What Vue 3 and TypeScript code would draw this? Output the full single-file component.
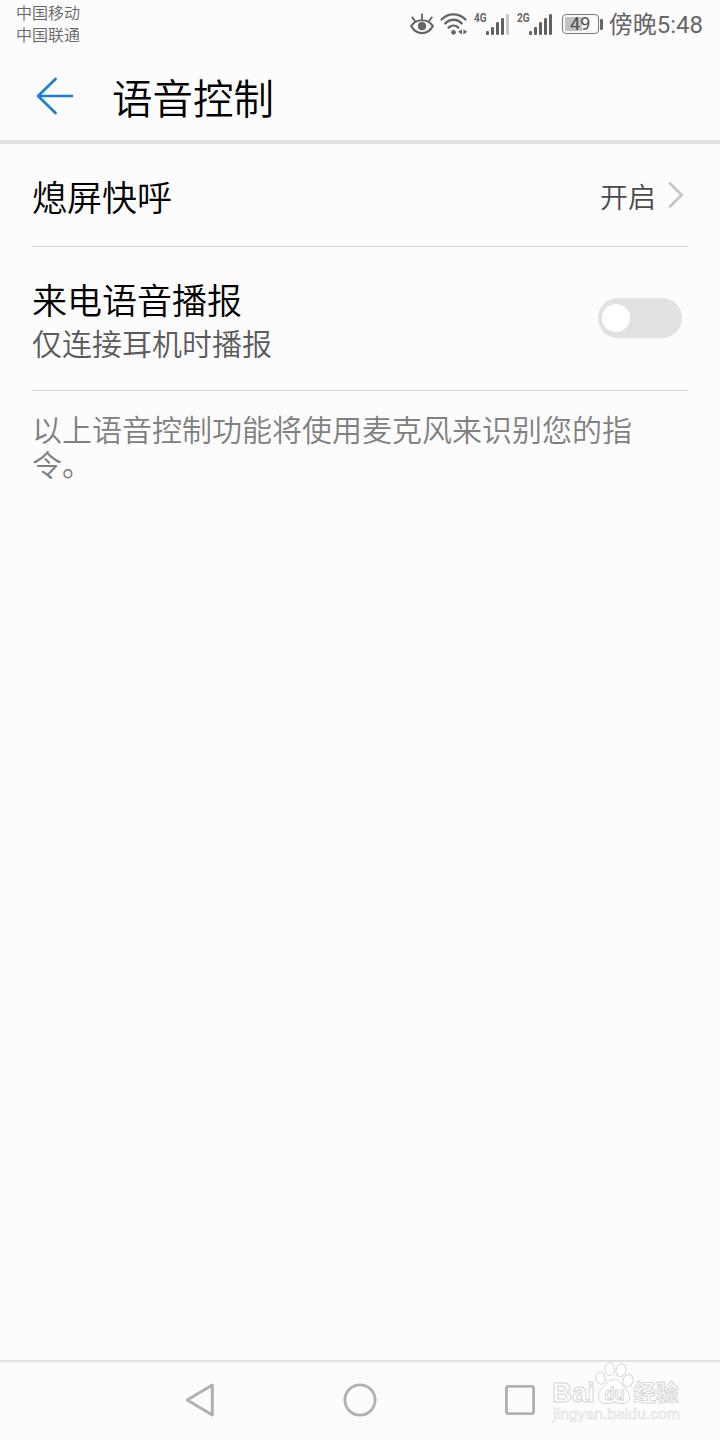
<script setup lang="ts">
import { ref } from 'vue'

const carriers: string[] = ['中国移动', '中国联通']
const announce = ref<boolean>(false)
const bars = [
  { x: 0, h: 4 },
  { x: 5, h: 8 },
  { x: 10, h: 13 },
  { x: 15, h: 17 },
  { x: 20, h: 21 },
]
const sims = [
  { label: '4G', level: 4 },
  { label: '2G', level: 5 },
]
</script>

<template>
  <div class="screen">
    <div class="status">
      <div class="carriers">
        <span v-for="c in carriers" :key="c">{{ c }}</span>
      </div>
      <div class="indicators">
        <svg class="eye" width="24" height="22" viewBox="0 0 24 22" fill="none" stroke="#666" stroke-width="2.2" stroke-linecap="round">
          <path d="M1.2 13C6 5.3 18 5.3 22.8 13C18 22.5 6 22.5 1.2 13Z" />
          <path d="M12 1.3V6M2.2 4.4L5 8M21.8 4.4L19 8" stroke-width="1.9" />
          <circle cx="12" cy="13.2" r="4.1" fill="#666" stroke="none" />
        </svg>
        <svg class="wifi" width="28" height="23" viewBox="0 0 28 23" fill="none" stroke="#666" stroke-width="2.3" stroke-linecap="round">
          <path d="M1.5 6.5C8.5 -.3 18.5 -.3 25.5 6.5M5.2 10.5C10.2 5.5 16.8 5.5 21.8 10.5M8.6 14.6C11.5 11.9 15.5 11.9 18.4 14.6" />
          <circle cx="13.5" cy="19.3" r="2.4" fill="#666" stroke="none" />
          <path d="M22 16.2V21.4L18 18.8ZM23.4 16.2V21.4L27.2 18.8Z" fill="#666" stroke="none" />
        </svg>
        <div v-for="s in sims" :key="s.label" class="sim">
          <span class="net">{{ s.label }}</span>
          <svg width="23" height="23" viewBox="0 0 23 23">
            <rect v-for="(b, i) in bars" :key="b.x" :x="b.x" :y="22 - b.h" width="3" :height="b.h" rx="1.2" :fill="i < s.level ? '#606060' : '#c8c8c8'" />
          </svg>
        </div>
        <div class="battery"><span class="cell">49</span><i class="nub"></i></div>
        <span class="clock">傍晚5:48</span>
      </div>
    </div>

    <header class="bar">
      <svg width="38" height="38" viewBox="0 0 38 38" fill="none" stroke="#1b7fd8" stroke-width="2.7" stroke-linecap="round" stroke-linejoin="round">
        <path d="M19.5 2L2 19L19.5 36M2.5 19H36" />
      </svg>
      <h1>语音控制</h1>
    </header>

    <main>
      <div class="row first">
        <span class="title">熄屏快呼</span>
        <span class="value">开启</span>
        <svg width="16" height="28" viewBox="0 0 16 28" fill="none" stroke="#c5c5c5" stroke-width="2.6" stroke-linecap="round" stroke-linejoin="miter">
          <path d="M2 2.5L13.7 14L2 25.5" />
        </svg>
      </div>
      <div class="row second">
        <div class="texts">
          <span class="title">来电语音播报</span>
          <span class="sub">仅连接耳机时播报</span>
        </div>
        <button class="switch" :class="{ on: announce }" role="switch" :aria-checked="announce" @click="announce = !announce">
          <i></i>
        </button>
      </div>
      <p class="note">以上语音控制功能将使用麦克风来识别您的指令。</p>
    </main>

    <nav class="nav">
      <svg width="32" height="36" viewBox="0 0 32 36" fill="none" stroke="#b0b0b0" stroke-width="3" stroke-linejoin="round">
        <path d="M28.3 3L3.3 18L28.3 33Z" />
      </svg>
      <svg width="34" height="34" viewBox="0 0 34 34" fill="none" stroke="#b0b0b0" stroke-width="2.8">
        <circle cx="17" cy="17" r="15.1" />
      </svg>
      <svg width="30" height="30" viewBox="0 0 30 30" fill="none" stroke="#b0b0b0" stroke-width="2.8">
        <rect x="1.4" y="1.4" width="27.2" height="27.2" rx="1.8" />
      </svg>
      <svg class="mark" width="132" height="64" viewBox="0 0 132 64" fill="#fff" stroke="#d6d6d6" stroke-width="1">
        <text class="latin" x="0" y="40.5" font-size="28" textLength="43" lengthAdjust="spacingAndGlyphs">Bai</text>
        <ellipse cx="48.5" cy="17" rx="4.6" ry="6.2" transform="rotate(-12 48.5 17)" />
        <ellipse cx="57.7" cy="8.2" rx="4.8" ry="6.5" />
        <ellipse cx="69" cy="9.2" rx="5" ry="6.5" transform="rotate(12 69 9.2)" />
        <ellipse cx="76" cy="19.5" rx="5" ry="6.2" transform="rotate(20 76 19.5)" />
        <path d="M62.5 18.5C55 18.5 54 24.5 49.5 28C44.5 33 46 42.5 53 42.5C58 43 59 41.5 62.5 41.5C66 41.5 68 43 72 42.5C79.5 41.5 79 33 73.5 28C69.5 24.5 69 18.5 62.5 18.5Z" />
        <text class="latin" x="52.5" y="38.5" font-size="18" textLength="20" lengthAdjust="spacingAndGlyphs">du</text>
        <text class="han" x="81.5" y="39.7" font-size="23" textLength="45" lengthAdjust="spacingAndGlyphs">经验</text>
        <text class="url" x="1" y="58" font-size="15" textLength="127" lengthAdjust="spacingAndGlyphs">jingyan.baidu.com</text>
      </svg>
    </nav>
  </div>
</template>

<style>
body {
  margin: 0;
  background: #fcfcfc;
}
</style>

<style scoped>
.screen {
  width: 720px;
  height: 1440px;
  display: flex;
  flex-direction: column;
  overflow: hidden;
  background: #fcfcfc;
  color: #000;
  font-family: "Noto Sans CJK SC", sans-serif;
  font-weight: 350;
}
.status {
  height: 52px;
  box-sizing: border-box;
  padding: 0 17px 0 16px;
  display: flex;
  justify-content: space-between;
  color: #666;
}
.carriers {
  display: flex;
  flex-direction: column;
  padding-top: 1px;
  font-size: 16px;
  line-height: 22px;
  font-weight: 350;
}
.indicators {
  height: 48px;
  display: flex;
  align-items: center;
}
.wifi {
  margin-left: 6px;
}
.sim {
  display: flex;
  align-items: center;
  margin-left: 6px;
}
.sim + .sim {
  margin-left: 8px;
}
.net {
  width: 12px;
  margin-top: -12px;
  font: 700 13px/14px Roboto, sans-serif;
  transform: scaleX(0.77);
  transform-origin: left;
  white-space: nowrap;
}
.battery {
  display: flex;
  align-items: center;
  margin-left: 10px;
}
.cell {
  width: 37px;
  height: 20px;
  box-sizing: border-box;
  border: 1px solid #777;
  border-radius: 4px;
  background: linear-gradient(90deg, #c2c2c2 17px, transparent 17px) 2px 2px / 32px 14px no-repeat;
  font: 400 18px/18px Roboto, sans-serif;
  text-align: center;
  color: #505050;
}
.nub {
  width: 3px;
  height: 11px;
  margin-left: 1px;
  border-radius: 1px;
  background: #666;
}
.clock {
  margin-left: 6px;
  padding-top: 2px;
  font-family: Roboto, "Noto Sans CJK SC", sans-serif;
  font-size: 24px;
  line-height: 48px;
  font-weight: 400;
}
.bar {
  height: 92px;
  box-sizing: border-box;
  border-bottom: 4px solid #e1e1e1;
  padding-left: 36px;
  display: flex;
  align-items: center;
  gap: 38px;
}
h1 {
  margin: 0;
  padding-top: 1px;
  font-size: 40.5px;
  line-height: 60px;
  font-weight: 350;
}
main {
  flex: 1;
  padding: 0 32px;
}
.row {
  display: flex;
  align-items: center;
  border-bottom: 1px solid #d4d4d4;
}
.first {
  height: 102px;
  padding-right: 4px;
}
.first .title {
  padding-top: 1px;
}
.second {
  height: 143px;
  padding-right: 6px;
  justify-content: space-between;
}
.title {
  font-size: 35px;
  line-height: 46px;
}
.value {
  margin-left: auto;
  margin-right: 12px;
  padding-top: 1px;
  font-size: 28px;
  line-height: 40px;
  color: #4a4a4a;
}
.texts {
  display: flex;
  flex-direction: column;
  padding-top: 1px;
}
.sub {
  font-size: 30px;
  line-height: 41px;
  color: #5a5a5a;
}
.switch {
  width: 84px;
  height: 40px;
  margin-bottom: 2px;
  padding: 0 4px;
  border: 0;
  border-radius: 20px;
  background: #e1e1e1;
  display: flex;
  align-items: center;
}
.switch.on {
  justify-content: flex-end;
  background: #1b7fd8;
}
.switch i {
  width: 28px;
  height: 28px;
  border-radius: 50%;
  background: #fff;
}
.note {
  margin: 0;
  padding: 20px 32px 0 0;
  font-size: 30px;
  line-height: 35px;
  color: #808080;
}
.nav {
  height: 80px;
  box-sizing: border-box;
  border-top: 2px solid #e1e1e1;
  padding-left: 184px;
  padding-bottom: 2px;
  position: relative;
  display: flex;
  align-items: center;
}
.nav svg:nth-child(2) {
  margin-left: 127px;
}
.nav svg:nth-child(3) {
  margin-left: 128px;
}
.nav .mark {
  position: absolute;
  left: 552px;
  top: -1px;
}
.latin {
  font-family: "Liberation Sans", sans-serif;
  font-weight: 700;
}
.han {
  font-family: "Noto Sans CJK SC", sans-serif;
  font-weight: 700;
}
.url {
  font-family: "Liberation Sans", sans-serif;
  font-weight: 400;
  stroke-width: 0.6px;
  stroke: #dcdcdc;
}
</style>
